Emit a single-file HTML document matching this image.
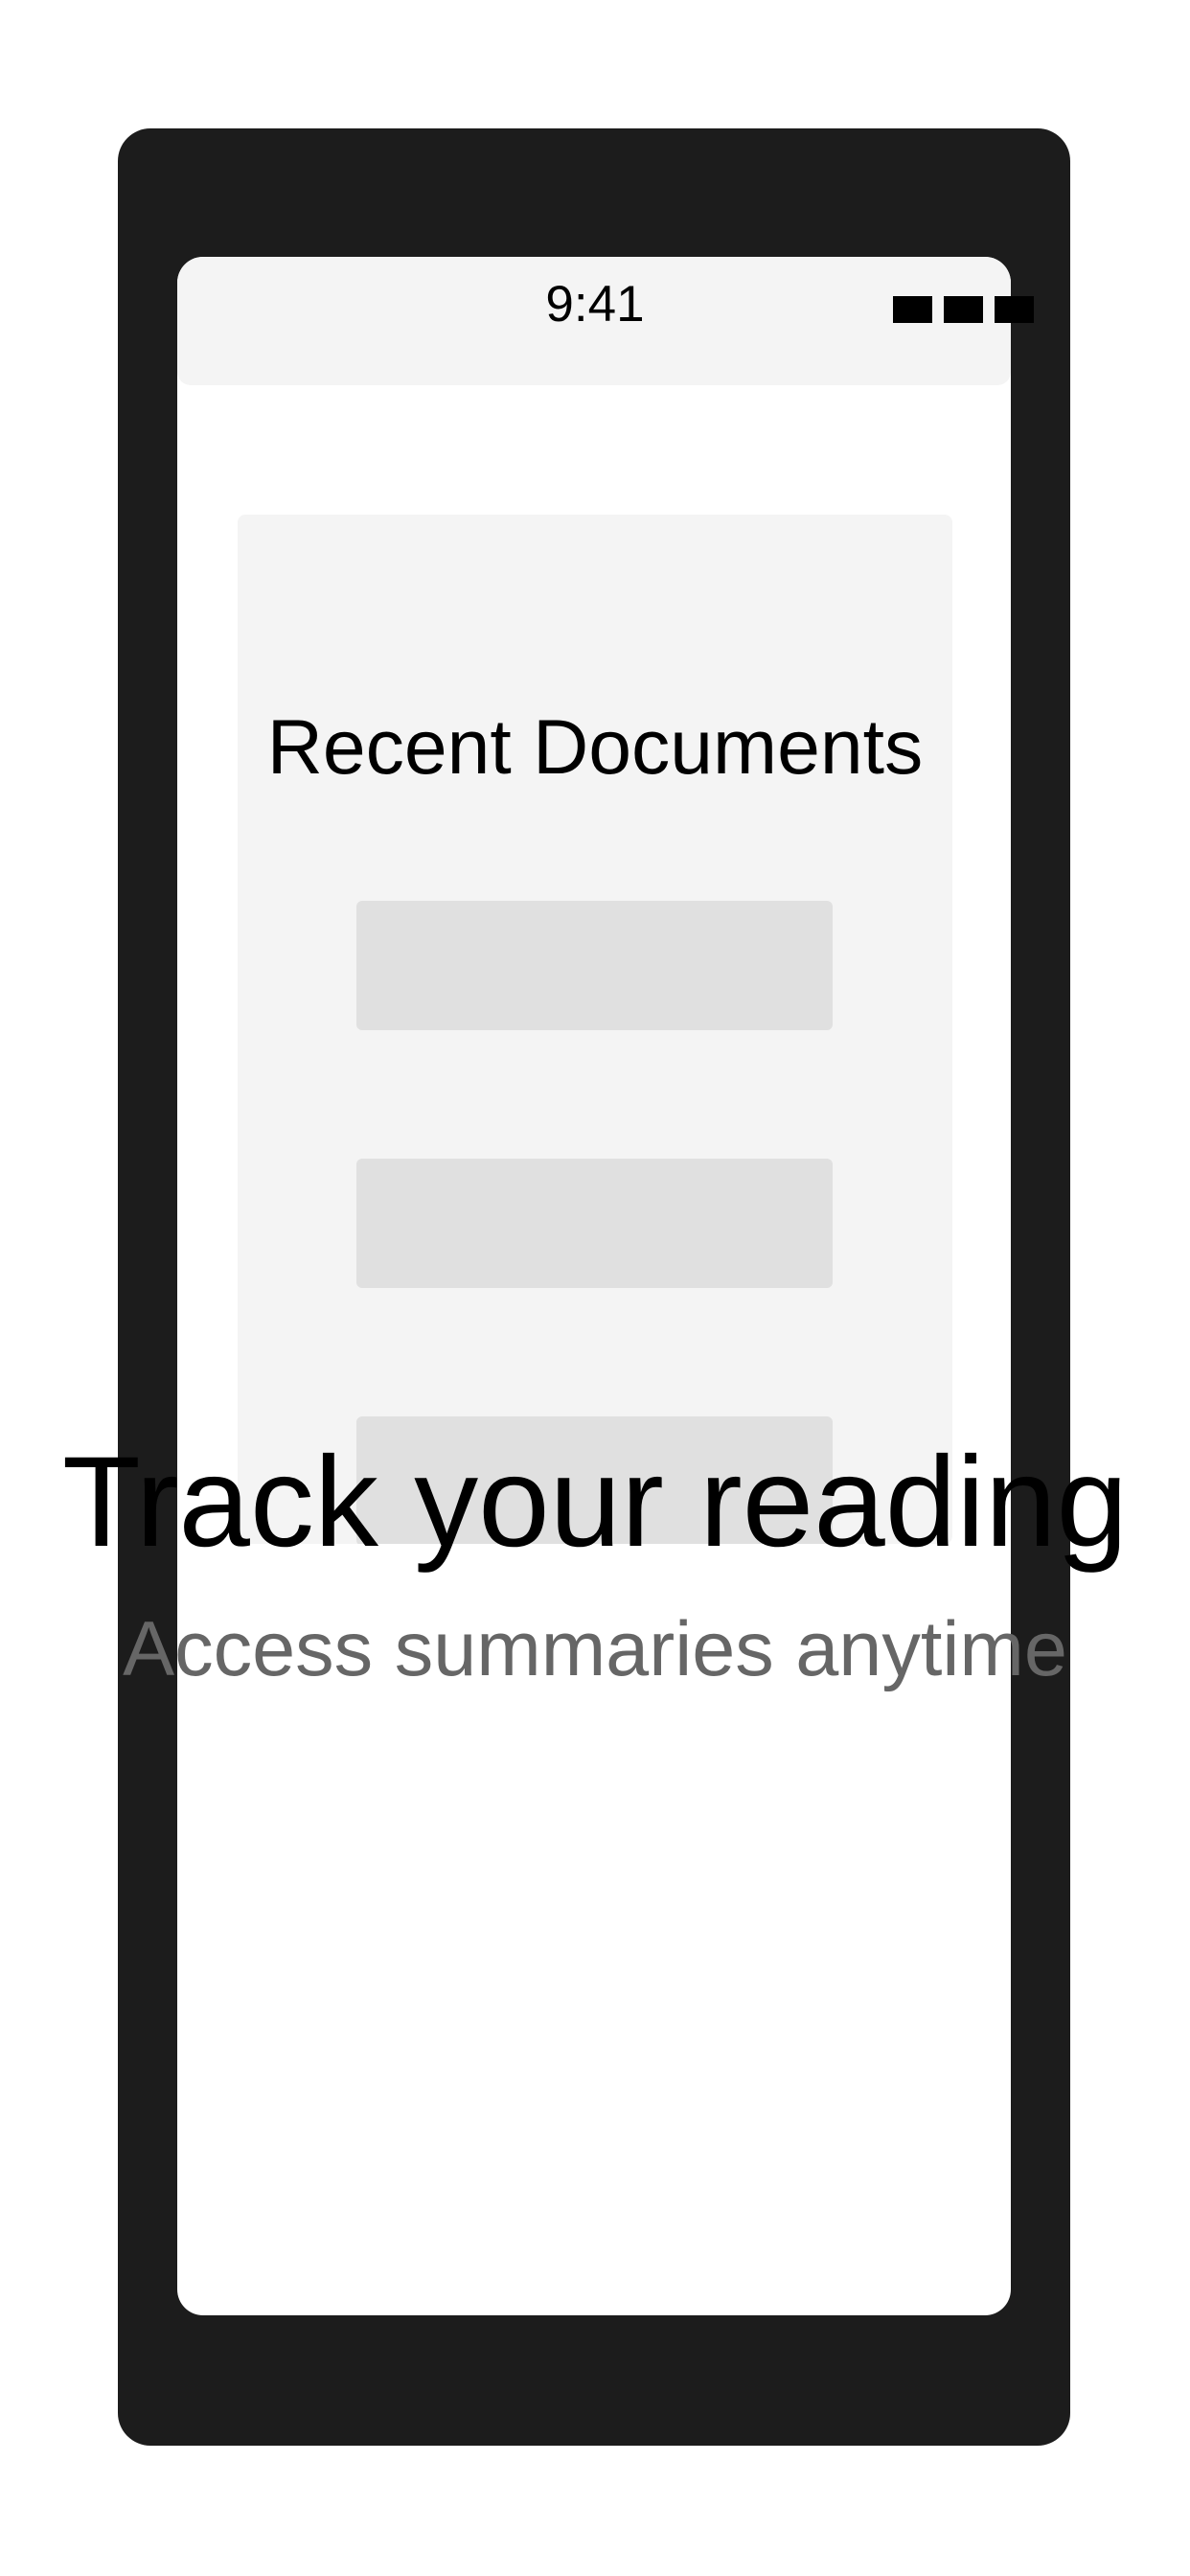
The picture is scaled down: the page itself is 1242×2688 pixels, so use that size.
<!DOCTYPE html>
<html><head><meta charset="utf-8"><style>
html,body{margin:0;padding:0;width:1242px;height:2688px;background:#fff;overflow:hidden;font-family:"Liberation Sans",Arial,sans-serif}
.phone{position:absolute;left:123px;top:134px;width:994px;height:2418px;background:#1c1c1c;border-radius:34px}
.screen{position:absolute;left:185px;top:268px;width:870px;height:2148px;background:#fff;border-radius:27px}
.status{position:absolute;left:185px;top:268px;width:870px;height:134px;background:#f4f4f4;border-radius:27px 27px 14px 14px}
.time{position:absolute;left:0;width:1242px;top:286px;text-align:center;font-size:53px;line-height:64px;color:#000}
.bat{position:absolute;top:309px;width:41px;height:28px;background:#000}
.card{position:absolute;left:248px;top:537px;width:746px;height:1074px;background:#f4f4f4;border-radius:8px;overflow:hidden}
.rt{position:absolute;left:0;width:1242px;top:731px;text-align:center;font-size:80.5px;line-height:98px;color:#000}
.bar{position:absolute;left:124px;width:497px;height:135px;background:#e0e0e0;border-radius:6px}
.t1{position:absolute;left:0;width:1242px;top:1490px;text-align:center;font-size:134px;line-height:156px;color:#000}
.t2{position:absolute;left:0;width:1242px;top:1671px;text-align:center;font-size:81px;line-height:100px;color:#666}
</style></head><body>
<div class="phone"></div>
<div class="screen"></div>
<div class="status"></div>
<div class="time">9:41</div>
<div class="bat" style="left:932px"></div>
<div class="bat" style="left:985px"></div>
<div class="bat" style="left:1038px"></div>
<div class="card">
<div class="bar" style="top:403px"></div>
<div class="bar" style="top:672px"></div>
<div class="bar" style="top:941px"></div>
</div>
<div class="rt">Recent Documents</div>
<div class="t1">Track your reading</div>
<div class="t2">Access summaries anytime</div>
</body></html>
